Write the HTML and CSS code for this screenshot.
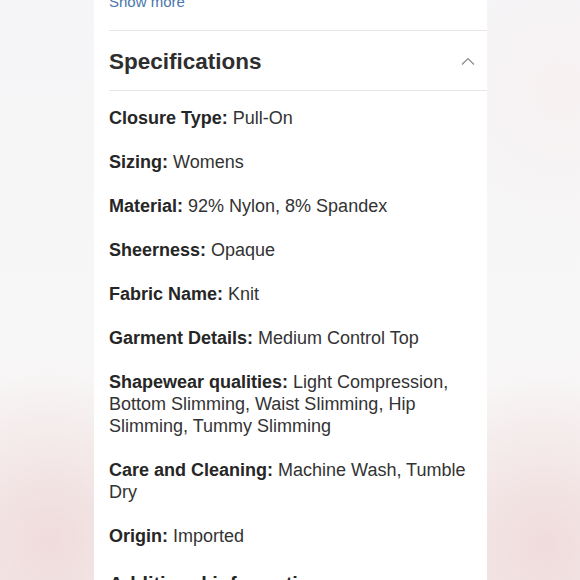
FILE: index.html
```html
<!DOCTYPE html>
<html lang="en">
<head>
<meta charset="utf-8">
<link rel="stylesheet" href="styles.css">
<title>Specifications</title>
</head>
<body>
<div class="stage">
  <main class="panel">
    <a class="show-more" href="#">Show more</a>
    <section class="section">
      <div class="section-head">
        <h2 class="section-title">Specifications</h2>
        <svg class="chevron" width="14" height="8" viewBox="0 0 14 8" aria-hidden="true"><path d="M1 7.5 L7 1.5 L13 7.5" fill="none" stroke="#8a8a8a" stroke-width="1.2"/></svg>
      </div>
      <div class="specs">
        <p class="spec"><b>Closure Type:</b> Pull-On</p>
        <p class="spec"><b>Sizing:</b> Womens</p>
        <p class="spec"><b>Material:</b> 92% Nylon, 8% Spandex</p>
        <p class="spec"><b>Sheerness:</b> Opaque</p>
        <p class="spec"><b>Fabric Name:</b> Knit</p>
        <p class="spec"><b>Garment Details:</b> Medium Control Top</p>
        <p class="spec"><b>Shapewear qualities:</b> Light Compression, Bottom Slimming, Waist Slimming, Hip Slimming, Tummy Slimming</p>
        <p class="spec"><b>Care and Cleaning:</b> Machine Wash, Tumble Dry</p>
        <p class="spec"><b>Origin:</b> Imported</p>
      </div>
      <h3 class="sub-title">Additional information</h3>
    </section>
  </main>
</div>
</body>
</html>
```

FILE: styles.css
```css
html, body {
  margin: 0;
  padding: 0;
}
body {
  width: 580px;
  height: 580px;
  overflow: hidden;
  font-family: "Liberation Sans", Arial, sans-serif;
  background:
    radial-gradient(ellipse 150px 170px at 50px 540px, rgba(238, 214, 214, 0.8), rgba(238, 214, 214, 0) 100%),
    radial-gradient(ellipse 150px 170px at 545px 545px, rgba(238, 214, 214, 0.8), rgba(238, 214, 214, 0) 100%),
    radial-gradient(ellipse 120px 140px at 560px 90px, rgba(247, 238, 238, 0.7), rgba(247, 238, 238, 0) 100%),
    linear-gradient(180deg, #f5f5f7 0%, #f8f7f7 60%, #f6efef 100%);
}
.stage {
  display: flex;
  padding-left: 94px;
}
.panel {
  width: 393px;
  height: 600px;
  background: #ffffff;
  margin-top: -8px;
}
.show-more {
  display: block;
  margin-left: 15px;
  font-size: 15px;
  line-height: 20px;
  color: #4a76ad;
  text-decoration: none;
  height: 38px;
}
.section {
  margin-left: 15px;
}
.section-head {
  border-top: 1px solid #e6e6e6;
  border-bottom: 1px solid #e6e6e6;
  height: 59px;
  display: flex;
  align-items: center;
  justify-content: space-between;
}
.section-title {
  margin: 2px 0 0;
  font-size: 22.5px;
  font-weight: bold;
  color: #2e2e2e;
  line-height: 28px;
}
.chevron {
  margin-right: 12px;
  margin-top: 0;
}
.specs {
  padding-top: 16px;
  display: flex;
  flex-direction: column;
  gap: 22px;
  padding-right: 12px;
}
.spec {
  margin: 0;
  font-size: 18px;
  line-height: 22px;
  color: #333333;
}
.spec b {
  color: #262626;
}
.sub-title {
  margin: 25px 0 0;
  font-size: 20px;
  line-height: 24px;
  font-weight: bold;
  color: #262626;
}
```
